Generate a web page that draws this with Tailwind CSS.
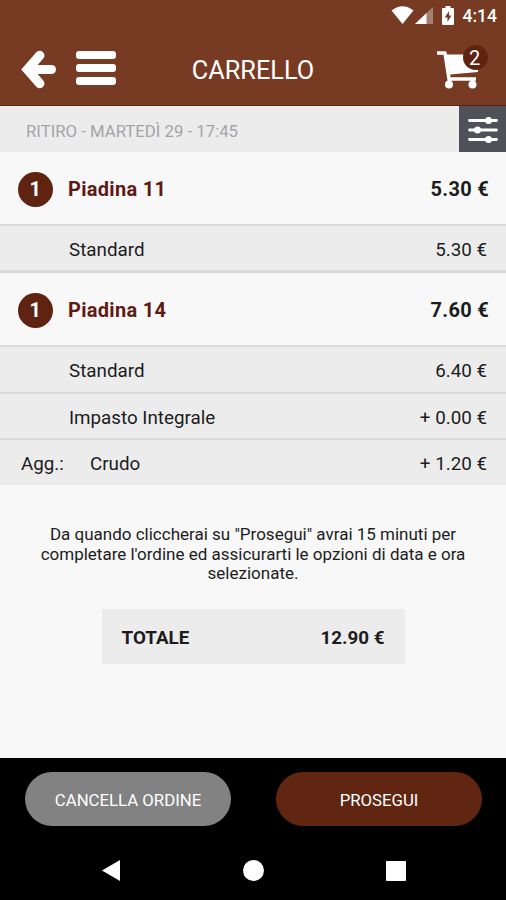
<!DOCTYPE html>
<html lang="it">
<head>
    <meta charset="UTF-8">
    <meta name="viewport" content="width=device-width, initial-scale=1.0">
    <title>Carrello</title>
    <script src="https://cdn.jsdelivr.net/npm/@tailwindcss/browser@4"></script>
</head>
<body class="bg-black font-['Roboto','Liberation_Sans',sans-serif]">

    <div class="w-[506px] h-[900px] flex flex-col overflow-hidden bg-[#f8f8f8] text-[#1c1c1c]">

        <!-- Header -->
        <header class="h-[106px] shrink-0 bg-[#773b23] border-b border-[#5e2008] text-white">
            <!-- Status bar -->
            <div class="h-8 flex items-center justify-end pr-[9px]">
                <svg class="w-[23px] h-[18px] mt-[-2px]" viewBox="0 0 23 18" fill="#fff">
                    <path d="M11.500 18 L.5 4.500 Q11.500 -4 22.500 4.500 Z"/>
                </svg>
                <svg class="w-[18px] h-[18px] ml-[1px]" viewBox="0 0 18 18">
                    <path d="M0 17 L18 0 V17 Z" fill="#fff" fill-opacity=".35"/>
                    <path d="M0 17 L11.500 6 V17 Z" fill="#fff"/>
                </svg>
                <svg class="w-3 h-[19px] ml-[9px] mt-[-2px]" viewBox="0 0 12 19">
                    <path d="M1 2 H3.500 V0 H8.500 V2 H11 Q12 2 12 3 V18 Q12 19 11 19 H1 Q0 19 0 18 V3 Q0 2 1 2 Z" fill="#fff"/>
                    <path d="M7 5 L2.800 11.500 H5.500 V16 L9.400 9.600 H7 Z" fill="#773b23"/>
                </svg>
                <span class="ml-[9px] pt-[2px] text-[17.500px] leading-none font-medium">4:14</span>
            </div>
            <!-- Toolbar -->
            <div class="h-[74px] flex items-center justify-between pl-[20px] pr-[18px]">
                <div class="flex items-center w-[120px]">
                    <svg class="w-9 h-10" viewBox="0 0 36 40" fill="none" stroke="#fff" stroke-linecap="round">
                        <path d="M19.700 6.500 L7.500 20.500 L19.700 34.500" stroke-width="9.500"/>
                        <path d="M10 20.500 H31.500" stroke-width="9"/>
                    </svg>
                    <div class="ml-[20px] mt-[-2px] w-10 flex flex-col gap-[5px]">
                        <span class="h-2 rounded-[3px] bg-white"></span>
                        <span class="h-2 rounded-[3px] bg-white"></span>
                        <span class="h-2 rounded-[3px] bg-white"></span>
                    </div>
                </div>
                <h1 class="pt-[3px] pr-[2px] text-[25.300px] leading-none">CARRELLO</h1>
                <div class="relative mt-[-2px] w-[120px] h-[46px] flex justify-end">
                    <svg class="w-[52px] h-[46px]" viewBox="0 0 52 46" fill="none" stroke="#fff">
                        <path d="M1 8 H9 L13.500 37" stroke-width="3.500" stroke-linejoin="round"/>
                        <path d="M10 9.500 H36 V24 L42 24.500 V27 L14 29.500 Z" fill="#fff" stroke="none"/>
                        <path d="M12 34 H40" stroke-width="3.500"/>
                        <path d="M36.500 34 V39" stroke-width="3"/>
                        <circle cx="13" cy="39.500" r="4" fill="#fff" stroke="none"/>
                        <circle cx="36.500" cy="39.500" r="4" fill="#fff" stroke="none"/>
                    </svg>
                    <span class="absolute top-0 right-0 w-[25px] h-[25px] rounded-full bg-[#5f2411] text-[20px] leading-[27px] pr-[2px] text-center">2</span>
                </div>
            </div>
        </header>

        <!-- Pickup slot -->
        <div class="h-[46px] shrink-0 flex items-center justify-between bg-[#ececec] pl-[26px]">
            <span class="text-[16.750px] leading-none text-[#a4a4a8] pt-1">RITIRO - MARTEDÌ 29 - 17:45</span>
            <button class="w-[47px] h-full bg-[#505059] flex items-center justify-center">
                <svg class="w-[30px] h-[28px] mt-[2px]" viewBox="0 0 30 28" fill="#fff" stroke="#fff" stroke-width="2.800" stroke-linecap="round">
                    <path d="M1.500 4.500 H28.500 M1.500 14 H28.500 M1.500 23.500 H28.500"/>
                    <g stroke="none">
                        <circle cx="20.500" cy="4.500" r="3.500"/>
                        <circle cx="9.500" cy="14" r="3.500"/>
                        <circle cx="20.500" cy="23.500" r="3.500"/>
                    </g>
                </svg>
            </button>
        </div>

        <!-- Order items -->
        <section class="shrink-0 text-[18.800px] leading-none">
            <div class="h-[72px] flex items-center pt-[2px] pl-[18px] pr-[17px] text-[20px] font-bold tracking-[0.3px]">
                <span class="w-[35px] h-[35px] rounded-full bg-[#5f2411] text-white flex items-center justify-center">1</span>
                <span class="ml-[15px] text-[#5f1a14]">Piadina 11</span>
                <span class="ml-auto">5.30 €</span>
            </div>
            <div class="h-[49px] flex items-center bg-[#ececec] border-t-2 border-b-3 border-[#d9d9d9] pt-[4px] pl-[69px] pr-[19px]">
                <span>Standard</span>
                <span class="ml-auto">5.30 €</span>
            </div>
            <div class="h-[72px] flex items-center pt-[2px] pl-[18px] pr-[17px] text-[20px] font-bold tracking-[0.3px]">
                <span class="w-[35px] h-[35px] rounded-full bg-[#5f2411] text-white flex items-center justify-center">1</span>
                <span class="ml-[15px] text-[#5f1a14]">Piadina 14</span>
                <span class="ml-auto">7.60 €</span>
            </div>
            <div class="h-[49px] flex items-center bg-[#ececec] border-t-2 border-b-2 border-[#d9d9d9] pt-[4px] pl-[69px] pr-[19px]">
                <span>Standard</span>
                <span class="ml-auto">6.40 €</span>
            </div>
            <div class="h-[46px] flex items-center bg-[#ececec] border-b-2 border-[#d9d9d9] pt-[4px] pl-[69px] pr-[19px]">
                <span>Impasto Integrale</span>
                <span class="ml-auto">+ 0.00 €</span>
            </div>
            <div class="h-[45px] flex items-center bg-[#ececec] pt-[4px] pl-[21px] pr-[19px]">
                <span class="w-[69px]">Agg.:</span>
                <span>Crudo</span>
                <span class="ml-auto">+ 1.20 €</span>
            </div>
        </section>

        <!-- Notice and total -->
        <section class="flex-1 flex flex-col items-center pt-[40px]">
            <p class="text-center text-[17px] leading-[19.700px] whitespace-nowrap">
                Da quando cliccherai su "Prosegui" avrai 15 minuti per<br>
                completare l'ordine ed assicurarti le opzioni di data e ora<br>
                selezionate.
            </p>
            <div class="mt-[25px] w-[303px] h-[55px] flex items-center justify-between pt-[3px] px-5 bg-[#ececec] text-[18.800px] leading-none font-bold">
                <span>TOTALE</span>
                <span>12.90 €</span>
            </div>
        </section>

        <!-- Actions -->
        <footer class="h-[142px] shrink-0 bg-black text-white">
            <div class="flex justify-between pt-[14px] pl-[25px] pr-[24px] text-[16.750px] leading-none">
                <button class="w-[206px] h-[54px] pt-[2px] rounded-full bg-[#828282]">CANCELLA ORDINE</button>
                <button class="w-[206px] h-[54px] pt-[2px] rounded-full bg-[#602611]">PROSEGUI</button>
            </div>
            <!-- Android navigation -->
            <div class="mt-[34px] flex items-center justify-between pl-[102px] pr-[100px]">
                <svg class="w-[18px] h-[21px]" viewBox="0 0 18 21" fill="#fff"><path d="M0 10.500 L18 0 V21 Z"/></svg>
                <span class="w-[21px] h-[21px] rounded-full bg-white"></span>
                <span class="w-[20px] h-[20px] rounded-[1px] bg-white"></span>
            </div>
        </footer>
    </div>

</body>
</html>
